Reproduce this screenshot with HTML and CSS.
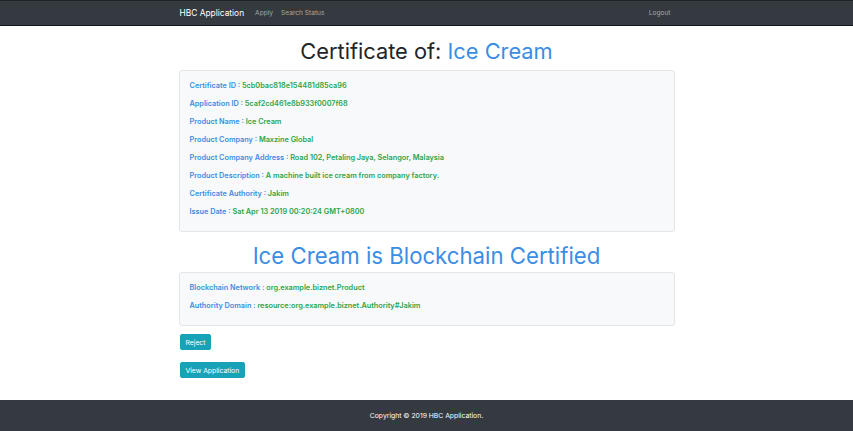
FILE: index.html
```html
<!DOCTYPE html>
<html>
<head>
<meta charset="utf-8">
<link rel="stylesheet" href="styles.css">
</head>
<body>
<div class="page">
  <nav class="navbar">
    <div class="nav-inner">
      <span class="brand">HBC Application</span>
      <span class="nav-link">Apply</span>
      <span class="nav-link">Search Status</span>
      <span class="nav-spacer"></span>
      <span class="nav-link">Logout</span>
    </div>
  </nav>
  <main class="container">
    <h1 class="title">Certificate of: <span class="blue">Ice Cream</span></h1>
    <div class="card">
      <p><span class="label">Certificate ID : </span><span class="value">5cb0bac818e154481d85ca96</span></p>
      <p><span class="label">Application ID : </span><span class="value">5caf2cd461e8b933f0007f68</span></p>
      <p><span class="label">Product Name : </span><span class="value">Ice Cream</span></p>
      <p><span class="label">Product Company : </span><span class="value">Maxzine Global</span></p>
      <p><span class="label">Product Company Address : </span><span class="value">Road 102, Petaling Jaya, Selangor, Malaysia</span></p>
      <p><span class="label">Product Description : </span><span class="value">A machine built ice cream from company factory.</span></p>
      <p><span class="label">Certificate Authority : </span><span class="value">Jakim</span></p>
      <p><span class="label">Issue Date : </span><span class="value">Sat Apr 13 2019 00:20:24 GMT+0800</span></p>
    </div>
    <h1 class="title blue second">Ice Cream is Blockchain Certified</h1>
    <div class="card">
      <p><span class="label">Blockchain Network : </span><span class="value">org.example.biznet.Product</span></p>
      <p><span class="label">Authority Domain : </span><span class="value">resource:org.example.biznet.Authority#Jakim</span></p>
    </div>
    <div class="actions">
      <button class="btn">Reject</button>
      <button class="btn">View Application</button>
    </div>
  </main>
  <footer class="footer">Copyright © 2019 HBC Application.</footer>
</div>
</body>
</html>
```

FILE: styles.css
```css
* { box-sizing: border-box; }
html, body { margin: 0; padding: 0; }
body {
  font-family: Inter, "Liberation Sans", sans-serif;
  background: #fff;
  color: #212529;
}
.page {
  min-height: 431px;
  display: flex;
  flex-direction: column;
}
.navbar {
  height: 26px;
  background: #343a40;
  border-top: 1px solid #1f2326;
  border-bottom: 1px solid #16191c;
}
.nav-inner {
  width: 496px;
  margin: 0 auto;
  height: 100%;
  display: flex;
  align-items: center;
}
.brand {
  color: #fff;
  font-size: 8.4px;
  margin-left: 1px;
  margin-right: 11px;
}
.nav-link {
  color: rgba(255,255,255,0.55);
  font-size: 6.6px;
  margin-right: 8px;
}
.nav-link:last-child { margin-right: 4px; }
.nav-spacer { flex: 1; }
.container {
  width: 496px;
  margin: 0 auto;
  flex: 1;
}
.title {
  font-weight: 400;
  font-size: 21.8px;
  line-height: 28px;
  text-align: center;
  margin: 11px 0 5px;
  color: #212529;
}
.title.second { font-size: 22.2px; margin: 10px 0 2px; }
.blue { color: #3b8de4; }
.card {
  background: #f8f9fa;
  border: 1px solid #e3e6e9;
  border-radius: 3px;
  padding: 10px 10px 6px;
}
.card p {
  margin: 0 0 8px;
  font-size: 7.3px;
  line-height: 10px;
  font-weight: 600;
}
.label { color: #3b8de4; }
.value { color: #2aa54a; }
.actions {
  display: flex;
  flex-direction: column;
  align-items: flex-start;
  gap: 12px;
  margin-top: 8px;
}
.btn {
  font-family: inherit;
  font-size: 6.8px;
  color: #fff;
  background: #17a2b8;
  border: 1px solid #17a2b8;
  border-radius: 2px;
  height: 16px;
  padding: 0 5px;
  margin-left: 1px;
}
.footer {
  height: 31px;
  background: #343a40;
  color: #fff;
  font-size: 6.8px;
  display: flex;
  align-items: center;
  justify-content: center;
}
```
